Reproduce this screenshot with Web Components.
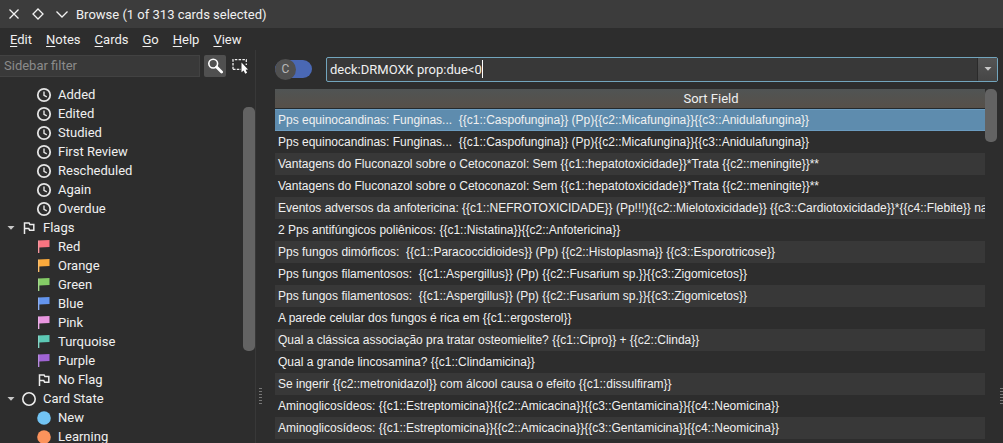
<!DOCTYPE html>
<html lang="en">
<head>
<meta charset="utf-8">
<title>Browse</title>
<style>
  body { margin: 0; background: #2d2d2d; color: #f0f0f0; font: 13px/19px Roboto, sans-serif; }
</style>
</head>
<body>
<browse-window></browse-window>

<script>
const define = (name, html, setup) => {
  const template = document.createElement('template');
  template.innerHTML = html;
  customElements.define(name, class extends HTMLElement {
    connectedCallback() {
      if (this.shadowRoot) return;
      this.attachShadow({ mode: 'open' }).append(template.content.cloneNode(true));
      if (setup) setup(this, this.shadowRoot);
    }
  });
};

/* ---------- icons ---------- */
const ICONS = {
  close: '<path d="M3.500 3.500l9 9M12.500 3.500l-9 9" fill="none" stroke="#f2f2f2" stroke-width="1.300"/>',
  diamond: '<path d="M8 3l5 5-5 5-5-5z" fill="none" stroke="#f2f2f2" stroke-width="1.300"/>',
  down: '<path d="M2.500 5.500L8 11l5.500-5.500" fill="none" stroke="#f2f2f2" stroke-width="1.300"/>',
  clock: '<circle cx="8" cy="8" r="6.200" fill="none" stroke="#e4e4e4" stroke-width="1.800"/><path d="M8 4.500V8.400l2.800 1.500" fill="none" stroke="#e4e4e4" stroke-width="1.400"/>',
  flag: '<path d="M2 1.500L13.500 1v7L3.300 8.600V14H2z" fill="currentColor"/><path d="M2 1.500h1.300V14H2z" fill="#fff" opacity=".25"/>',
  outline: '<path d="M3.500 14V3h4.600l.8 1.600h3.900v5.600H8.600l-.8-1.600H3.500" fill="none" stroke="#ececec" stroke-width="1.500"/>',
  ring: '<circle cx="8" cy="8" r="6.200" fill="none" stroke="#ececec" stroke-width="1.600"/>',
  dot: '<circle cx="8" cy="8" r="6.800" fill="currentColor"/>',
  search: '<circle cx="6.200" cy="5.600" r="4.400" fill="none" stroke="#fff" stroke-width="1.600"/><path d="M9.600 9.100l5 5" stroke="#fff" stroke-width="2.800" stroke-linecap="round"/>',
  select: '<path d="M1 11.300V1.700h13.300V7M1 11.300h8" fill="none" stroke="#eee" stroke-width="1.300" stroke-dasharray="2.500 1.300"/><path d="M9.500 4.500v9.700l2.200-1.800 1.500 3.300 1.900-.9-1.500-3.100 2.400-.3z" fill="#fff"/>',
  arrow: '<path d="M4.500 6h7L8 9.800z" fill="#c8c8c8"/>'
};
define('ui-icon', `
  <style>:host { display: block; flex: none; width: 16px; height: 16px } svg { display: block; width: 100%; height: 100% }</style>
  <svg viewBox="0 0 16 16" aria-hidden="true"></svg>`,
  (el, root) => { root.querySelector('svg').innerHTML = ICONS[el.getAttribute('name')]; });

/* ---------- title and menu bars ---------- */
define('title-bar', `
  <style>
    :host { display: flex; align-items: center; height: 28px; padding: 0 2px; background: #3c3c3c }
    button { border: 0; padding: 0 4px; background: none }
    h1 { margin: 0; padding-left: 2px; font: inherit }
  </style>
  <button aria-label="Close"><ui-icon name="close"></ui-icon></button>
  <button aria-label="Restore"><ui-icon name="diamond"></ui-icon></button>
  <button aria-label="Minimize"><ui-icon name="down"></ui-icon></button>
  <h1><slot></slot></h1>`);

define('menu-bar', `
  <style>
    :host { display: block }
    nav { display: flex; height: 22px; padding: 0 3px }
    button { border: 0; padding: 0 7px; background: none; color: inherit; font: inherit }
    button::first-letter { text-decoration: underline; text-underline-offset: 2px }
  </style>
  <nav><button>Edit</button><button>Notes</button><button>Cards</button><button>Go</button><button>Help</button><button>View</button></nav>`);

/* ---------- shared scroll thumb ---------- */
define('scroll-thumb', `
  <style>
    :host { display: block; flex: none; width: 12px }
    div { height: var(--thumb); margin-top: var(--offset, 0); border-radius: 5px; background: #636363 }
  </style><div></div>`);

/* ---------- sidebar ---------- */
define('tree-item', `
  <style>
    :host { display: flex; align-items: center; height: 19px; gap: 6px; padding-left: 36px; white-space: nowrap }
    :host([group]) { padding-left: 3px }
    .twist { display: none }
    :host([group]) .twist { display: block; margin-right: -4px }
  </style>
  <ui-icon class="twist" name="arrow"></ui-icon>
  <span class="icon"></span>
  <span><slot></slot></span>`,
  (el, root) => {
    const icon = document.createElement('ui-icon');
    icon.setAttribute('name', el.getAttribute('icon'));
    icon.style.color = el.getAttribute('tint') || 'inherit';
    root.querySelector('.icon').replaceWith(icon);
  });

define('side-bar', `
  <style>
    :host { display: flex; flex-direction: column; width: 256px; flex: none; min-height: 0; box-sizing: border-box; border-right: 1px solid #383838 }
    .filter { display: flex; align-items: center; height: 31px; flex: none }
    input { flex: 1; min-width: 0; box-sizing: border-box; height: 22px; border: 1px solid #424242; border-left: 0; padding: 0 4px; background: #393939; font: inherit; color: inherit; outline: 0 }
    input::placeholder { color: #8b8b8b; opacity: 1 }
    button { display: grid; place-items: center; width: 22px; height: 22px; border: 0; padding: 0; background: none }
    button.on { margin-left: 4px; background: #505050; border-radius: 2px }
    button.pick { margin: 0 4px 0 3px }
    .body { flex: 1; display: flex; min-height: 0; overflow: hidden }
    .tree { flex: 1; padding-top: 4px }
    scroll-thumb { --thumb: 244px; --offset: 26px }
  </style>
  <div class="filter">
    <input type="text" placeholder="Sidebar filter" aria-label="Sidebar filter">
    <button class="on" aria-label="Search"><ui-icon name="search"></ui-icon></button>
    <button class="pick" aria-label="Select"><ui-icon name="select"></ui-icon></button>
  </div>
  <div class="body">
    <div class="tree">
      <tree-item icon="clock">Added</tree-item>
      <tree-item icon="clock">Edited</tree-item>
      <tree-item icon="clock">Studied</tree-item>
      <tree-item icon="clock">First Review</tree-item>
      <tree-item icon="clock">Rescheduled</tree-item>
      <tree-item icon="clock">Again</tree-item>
      <tree-item icon="clock">Overdue</tree-item>
      <tree-item icon="outline" group>Flags</tree-item>
      <tree-item icon="flag" tint="#f87480">Red</tree-item>
      <tree-item icon="flag" tint="#fbaa3c">Orange</tree-item>
      <tree-item icon="flag" tint="#84cc66">Green</tree-item>
      <tree-item icon="flag" tint="#6495ee">Blue</tree-item>
      <tree-item icon="flag" tint="#e996e0">Pink</tree-item>
      <tree-item icon="flag" tint="#5cc8b4">Turquoise</tree-item>
      <tree-item icon="flag" tint="#a064d4">Purple</tree-item>
      <tree-item icon="outline">No Flag</tree-item>
      <tree-item icon="ring" group>Card State</tree-item>
      <tree-item icon="dot" tint="#72c4f4">New</tree-item>
      <tree-item icon="dot" tint="#fc935c">Learning</tree-item>
    </div>
    <scroll-thumb></scroll-thumb>
  </div>`);

/* ---------- splitter grip ---------- */
define('split-grip', `
  <style>
    :host { display: flex; justify-content: center; flex: none; width: 8px; overflow: hidden }
    i { width: 3px; height: 18px; background: repeating-linear-gradient(#777 0 1px, transparent 1px 3px) }
  </style><i></i>`);

/* ---------- search row ---------- */
define('mode-toggle', `
  <style>
    :host { display: block; flex: none }
    label { display: flex; align-items: center; width: 37px; height: 18px; border-radius: 9px; background: #4a68b4 }
    input { appearance: none; width: 0; height: 0; margin: 0 }
    span { width: 21px; height: 21px; border-radius: 50%; background: #505050; color: #b8b8b8; text-align: center; font-size: 12px; line-height: 21px }
  </style>
  <label><input type="checkbox"><span>C</span></label>`);

define('search-box', `
  <style>
    :host { display: flex; flex: 1; min-width: 0; height: 25px; box-sizing: border-box; border: 1px solid #72a5bd; border-radius: 2px; background: #383838 }
    .text { flex: 1; min-width: 0; display: flex; align-items: center; padding-left: 3px }
    input { field-sizing: content; height: 18px; border: 0; border-right: 1px solid #fff; padding: 0; background: none; color: inherit; font: inherit; outline: 0 }
    button { width: 20px; border: 0; border-left: 1px solid #2a2a2a; padding: 0; display: grid; place-items: center; background: linear-gradient(#545454, #464646) }
  </style>
  <div class="text"><input type="text" value="deck:DRMOXK prop:due&lt;0" aria-label="Search"></div>
  <button aria-label="History"><ui-icon name="arrow"></ui-icon></button>`);

/* ---------- card table ---------- */
const CARDS = [
  'Pps equinocandinas: Funginas...  {{c1::Caspofungina}} (Pp){{c2::Micafungina}}{{c3::Anidulafungina}}',
  'Pps equinocandinas: Funginas...  {{c1::Caspofungina}} (Pp){{c2::Micafungina}}{{c3::Anidulafungina}}',
  'Vantagens do Fluconazol sobre o Cetoconazol: Sem {{c1::hepatotoxicidade}}*Trata {{c2::meningite}}**',
  'Vantagens do Fluconazol sobre o Cetoconazol: Sem {{c1::hepatotoxicidade}}*Trata {{c2::meningite}}**',
  'Eventos adversos da anfotericina: {{c1::NEFROTOXICIDADE}} (Pp!!!){{c2::Mielotoxicidade}} {{c3::Cardiotoxicidade}}*{{c4::Flebite}} na',
  '2 Pps antifúngicos poliênicos: {{c1::Nistatina}}{{c2::Anfotericina}}',
  'Pps fungos dimórficos:  {{c1::Paracoccidioides}} (Pp) {{c2::Histoplasma}} {{c3::Esporotricose}}',
  'Pps fungos filamentosos:  {{c1::Aspergillus}} (Pp) {{c2::Fusarium sp.}}{{c3::Zigomicetos}}',
  'Pps fungos filamentosos:  {{c1::Aspergillus}} (Pp) {{c2::Fusarium sp.}}{{c3::Zigomicetos}}',
  'A parede celular dos fungos é rica em {{c1::ergosterol}}',
  'Qual a clássica associação pra tratar osteomielite? {{c1::Cipro}} + {{c2::Clinda}}',
  'Qual a grande lincosamina? {{c1::Clindamicina}}',
  'Se ingerir {{c2::metronidazol}} com álcool causa o efeito {{c1::dissulfiram}}',
  'Aminoglicosídeos: {{c1::Estreptomicina}}{{c2::Amicacina}}{{c3::Gentamicina}}{{c4::Neomicina}}',
  'Aminoglicosídeos: {{c1::Estreptomicina}}{{c2::Amicacina}}{{c3::Gentamicina}}{{c4::Neomicina}}'
];
define('card-table', `
  <style>
    :host { display: flex; flex: 1; min-height: 0; overflow: hidden }
    .view { flex: 1; min-width: 0; overflow: hidden }
    table { width: 872px; border-spacing: 0; table-layout: fixed }
    th { height: 20px; padding: 1px 0 0; font-weight: 400; line-height: 18px; background: linear-gradient(#505454, #575049); border-bottom: 1px solid #242a2e; box-sizing: border-box }
    td { height: 22px; padding: 0 3px; font: 12px/22px "Liberation Sans", sans-serif; white-space: pre; box-sizing: border-box }
    tbody tr:nth-child(odd) { background: #383838 }
    tbody tr.selected { background: #5e8cae; box-shadow: inset 0 1px #6b9cc0, inset 0 -1px #6b9cc0 }
    scroll-thumb { --thumb: 53px }
  </style>
  <div class="view"><table><thead><tr><th scope="col">Sort Field</th></tr></thead><tbody></tbody></table></div>
  <scroll-thumb></scroll-thumb>`,
  (el, root) => {
    CARDS.forEach((text, i) => {
      const row = root.querySelector('tbody').insertRow();
      row.insertCell().textContent = text;
      if (i === 0) row.className = 'selected';
    });
  });

define('browse-window', `
  <style>
    :host { display: flex; flex-direction: column; height: 100vh; overflow: hidden }
    title-bar, menu-bar { flex: none }
    main { flex: 1; display: flex; min-height: 0 }
    .cards { position: relative; flex: 1; min-width: 0; display: flex; flex-direction: column; padding-left: 11px }
    .search { display: flex; align-items: center; gap: 14px; height: 38px; flex: none; padding: 0 5px 0 0 }
    card-table { margin-top: 1px; padding-right: 6px }
    split-grip { padding-top: 338px }
    .edge { position: absolute; top: 0; right: 0; width: 4px }
  </style>
  <title-bar>Browse (1 of 313 cards selected)</title-bar>
  <menu-bar></menu-bar>
  <main>
    <side-bar></side-bar>
    <split-grip></split-grip>
    <section class="cards">
      <div class="search"><mode-toggle></mode-toggle><search-box></search-box></div>
      <card-table></card-table>
      <split-grip class="edge"></split-grip>
    </section>
  </main>`);
</script>
</body>
</html>
